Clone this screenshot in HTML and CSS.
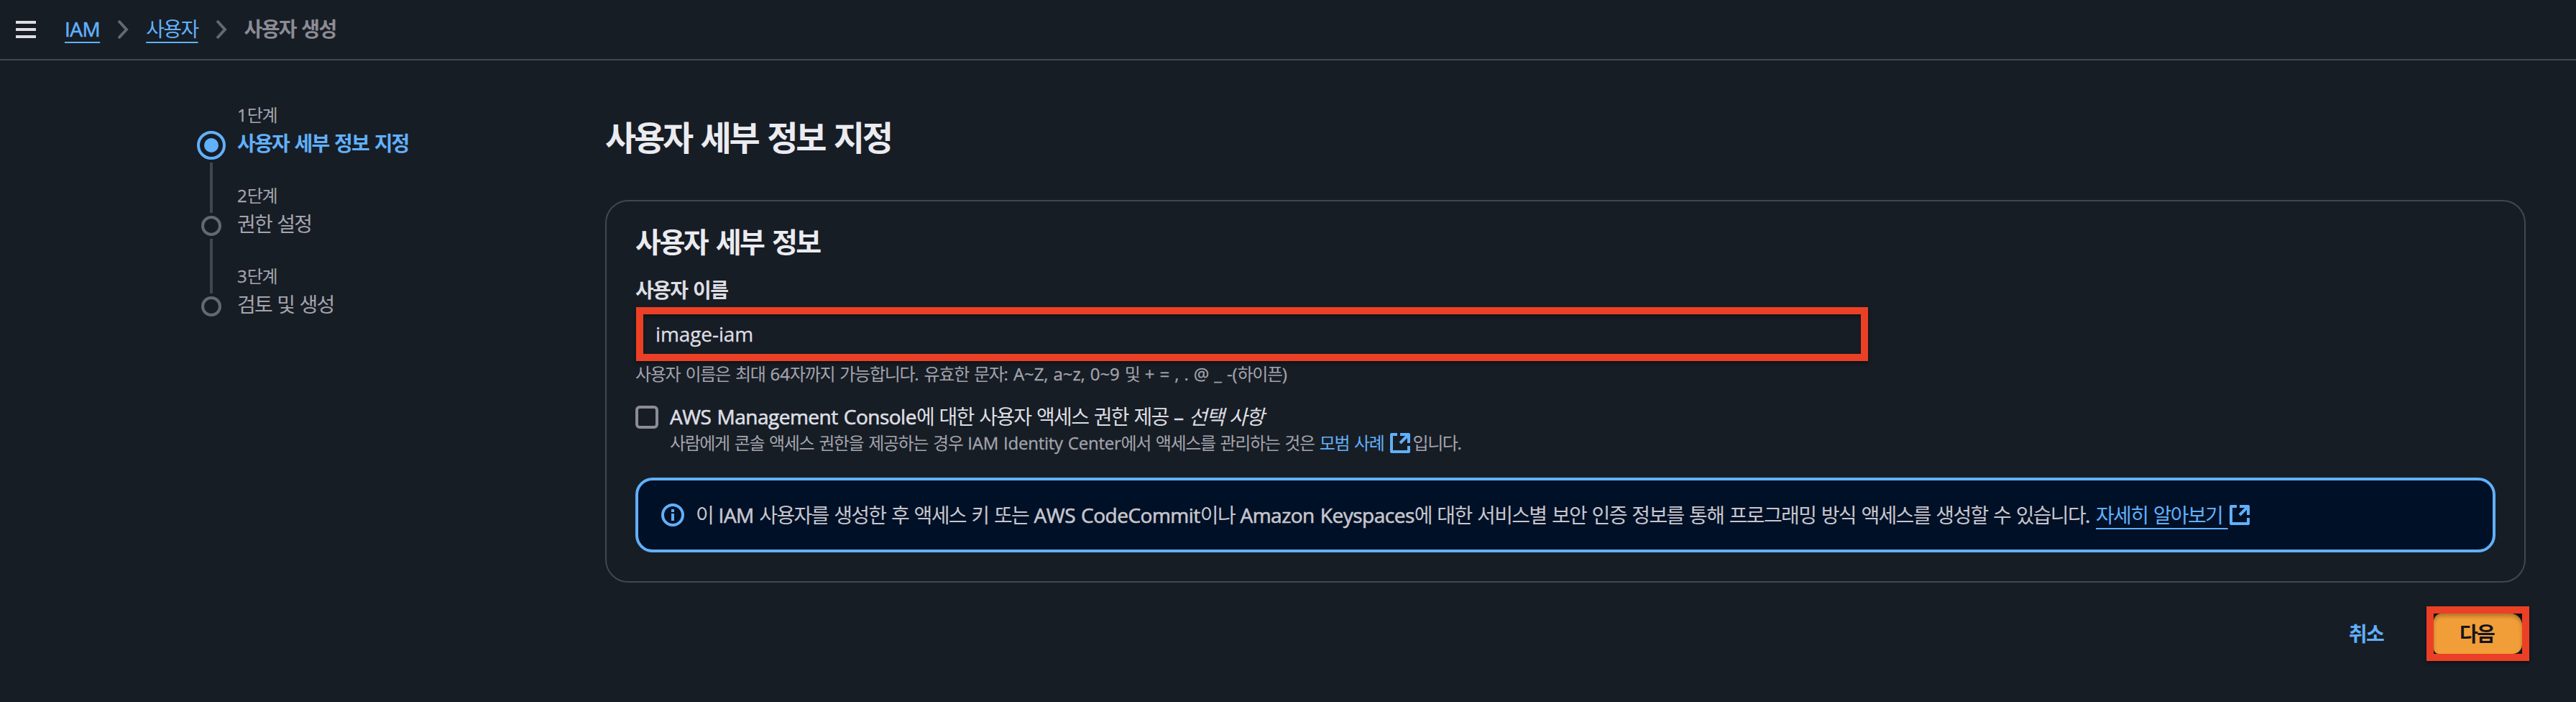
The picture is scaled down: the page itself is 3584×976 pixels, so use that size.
FILE: index.html
```html
<!DOCTYPE html>
<html lang="ko">
<head>
<meta charset="utf-8">
<title>사용자 생성</title>
<link rel="stylesheet" href="styles.css">
</head>
<body>
<header class="topbar">
  <svg class="menu" width="28" height="28" viewBox="0 0 28 28"><path d="M0 4h28M0 14h28M0 24h28" stroke="#dedee3" stroke-width="4"/></svg>
  <nav class="crumbs">
    <a class="crumb-link"><span class="en">IAM</span></a>
    <svg class="chev" width="16" height="28" viewBox="0 0 16 28"><path d="M2 2l11 12L2 26" fill="none" stroke="#656871" stroke-width="4"/></svg>
    <a class="crumb-link">사용자</a>
    <svg class="chev" width="16" height="28" viewBox="0 0 16 28"><path d="M2 2l11 12L2 26" fill="none" stroke="#656871" stroke-width="4"/></svg>
    <span class="current">사용자 생성</span>
  </nav>
</header>
<div class="layout">
  <aside class="steps">
    <div class="step active">
      <div class="rail"><svg width="40" height="40" viewBox="0 0 40 40"><circle cx="20" cy="20" r="18" fill="none" stroke="#61b0fb" stroke-width="4"/><circle cx="20" cy="20" r="10" fill="#61b0fb"/></svg><i class="line"></i></div>
      <div class="label"><small><span class="en">1</span>단계</small><b>사용자 세부 정보 지정</b></div>
    </div>
    <div class="step">
      <div class="rail"><svg width="28" height="28" viewBox="0 0 28 28"><circle cx="14" cy="14" r="12" fill="none" stroke="#656871" stroke-width="4"/></svg><i class="line"></i></div>
      <div class="label"><small><span class="en">2</span>단계</small><span class="name">권한 설정</span></div>
    </div>
    <div class="step">
      <div class="rail"><svg width="28" height="28" viewBox="0 0 28 28"><circle cx="14" cy="14" r="12" fill="none" stroke="#656871" stroke-width="4"/></svg></div>
      <div class="label"><small><span class="en">3</span>단계</small><span class="name">검토 및 생성</span></div>
    </div>
  </aside>
  <main class="content">
    <h1>사용자 세부 정보 지정</h1>
    <section class="card">
      <h2>사용자 세부 정보</h2>
      <label class="field-label">사용자 이름</label>
      <div class="input mark"><span class="en">image-iam</span></div>
      <p class="hint small">사용자 이름은 최대 <span class="en">64</span>자까지 가능합니다<span class="en">. </span>유효한 문자<span class="en">: A~Z, a~z, 0~9 </span>및 <span class="en">+ = , . @ _ -(</span>하이픈<span class="en">)</span></p>
      <div class="check">
        <span class="box"></span>
        <div>
          <p class="check-title"><span class="en">AWS Management Console</span>에 대한 사용자 액세스 권한 제공 <span class="en">–</span> <em>선택 사항</em></p>
          <p class="check-desc small"><span>사람에게 콘솔 액세스 권한을 제공하는 경우 <span class="en">IAM Identity Center</span>에서 액세스를 관리하는 것은 <a class="link">모범 사례 </a></span><svg class="ext" width="28" height="28" viewBox="0 0 28 28"><path d="M10 2H2v24h24v-8M14 2h12v12M25 3L14 14" fill="none" stroke="#61b0fb" stroke-width="4" stroke-linejoin="round"/></svg><span class="tail">입니다<span class="en">.</span></span></p>
        </div>
      </div>
      <div class="alert">
        <svg class="info" width="32" height="32" viewBox="0 0 32 32"><circle cx="16" cy="16" r="14" fill="none" stroke="#61b0fb" stroke-width="4"/><path d="M16 14v10M16 8v4" stroke="#61b0fb" stroke-width="4"/></svg>
        <p class="alert-text">이 <span class="en">IAM</span> 사용자를 생성한 후 액세스 키 또는 <span class="en">AWS CodeCommit</span>이나 <span class="en">Amazon Keyspaces</span>에 대한 서비스별 보안 인증 정보를 통해 프로그래밍 방식 액세스를 생성할 수 있습니다<span class="en">. </span><a class="link under">자세히 알아보기 </a></p>
        <svg class="ext" width="28" height="28" viewBox="0 0 28 28"><path d="M10 2H2v24h24v-8M14 2h12v12M25 3L14 14" fill="none" stroke="#61b0fb" stroke-width="4" stroke-linejoin="round"/></svg>
      </div>
    </section>
    <footer class="actions">
      <button class="cancel">취소</button>
      <div class="mark next-mark"><button class="next">다음</button></div>
    </footer>
  </main>
</div>
</body>
</html>
```
FILE: styles.css
```css
* { box-sizing: border-box; margin: 0; padding: 0; }
body {
  height: 976px;
  overflow: hidden;
  background: #171d25;
  color: #dedee3;
  font-family: "Noto Sans CJK KR", sans-serif;
  font-size: 28px;
  line-height: 40px;
  letter-spacing: -1.66px;
  word-spacing: 1.3px;
  white-space: nowrap;
}
svg { display: block; flex: none; }
.en { font-family: "Open Sans", sans-serif; line-height: 0; letter-spacing: -0.5px; -webkit-text-stroke: 0.6px currentColor; }
.small, small { font-size: 24px; letter-spacing: -1.3px; word-spacing: 1.7px; }
.small .en, small .en { letter-spacing: -0.1px; word-spacing: 1px; -webkit-text-stroke-width: 0.3px; }
b, .field-label { font-weight: 700; word-spacing: 1.6px; }
.topbar { height: 84px; border-bottom: 2px solid #424650; display: flex; align-items: center; padding-left: 22px; }
.menu { margin-right: 40px; }
.crumbs { display: flex; align-items: center; gap: 24px; }
.crumb-link, .under {
  color: #61b0fb;
  text-decoration: underline;
  text-decoration-thickness: 2px;
  text-underline-offset: 7px;
  text-decoration-skip-ink: none;
}
.crumb-link, .current { padding-bottom: 4px; }
.current { color: #8c8c94; font-weight: 700; }
.layout { display: flex; }
.steps { width: 842px; padding: 56px 0 0 274px; }
.step { display: flex; gap: 16px; height: 112px; }
.rail { width: 40px; display: flex; flex-direction: column; align-items: center; gap: 4px; padding-top: 48px; }
.active .rail { padding-top: 42px; }
.label { display: flex; flex-direction: column; color: #a4a4ad; }
.label small { line-height: 38px; }
.label b, .name { line-height: 40px; letter-spacing: -1.8px; }
.label b { color: #61b0fb; }
.line { width: 4px; background: #424650; height: 76px; flex: none; }
.active .line { height: 70px; }
.content { width: 2672px; padding-top: 77px; }
h1 { font-size: 47px; line-height: 56px; letter-spacing: -3.3px; word-spacing: 2.9px; color: #ebebf0; }
h2 { font-size: 39px; line-height: 48px; letter-spacing: -2.5px; word-spacing: 3.1px; color: #ebebf0; }
.card { margin-top: 61px; height: 532px; border: 2px solid #424650; border-radius: 32px; padding: 30px 40px; }
.field-label { display: block; margin-top: 24px; }
.mark { border: 10px solid #eb4026; box-shadow: 0 3px 5px rgba(0,0,0,.4), inset 0 3px 5px rgba(0,0,0,.3); }
.input { width: 1714px; height: 75px; line-height: 53px; padding-left: 17px; margin: 5px 0 0 1px; }
.input .en { letter-spacing: -0.1px; -webkit-text-stroke-width: 0.3px; }
.hint { line-height: 32px; margin-top: 1px; color: #a4a4ad; }
.check { display: flex; gap: 16px; margin-top: 25px; }
.box { width: 32px; height: 32px; border: 4px solid #8c8c94; border-radius: 6px; margin-top: 4px; flex: none; }
.check-title { margin-top: -2px; }
.check-desc { line-height: 34px; color: #a4a4ad; display: flex; white-space: pre; letter-spacing: -1.4px; }
.check-desc .en { letter-spacing: -0.25px; }
.check-desc .ext { margin: 4px 3px 0 2px; }
.link { color: #61b0fb; }
.alert { height: 104px; margin-top: 32px; border: 4px solid #61b0fb; border-radius: 24px; background: #001026; display: flex; align-items: center; padding-left: 32px; color: #c6c6cd; }
.info { margin-right: 16px; }
.alert-text { white-space: pre; padding-bottom: 3px; }
.alert .ext { margin-left: 2px; }
.actions { display: flex; justify-content: flex-end; margin-top: 33px; }
button { font: inherit; font-weight: 700; letter-spacing: inherit; border: 0; background: none; padding-bottom: 2px; }
.cancel { color: #61b0fb; margin-right: 60px; }
.next-mark { width: 143px; height: 76px; background: #12151c; margin-right: -5px; }
.next { display: block; width: 123px; height: 56px; padding-right: 3px; background: #f29e38; border-radius: 11px 16px 13px 7px; color: #12151c; box-shadow: inset 0 4px 5px rgba(0,0,0,.25); }
```
